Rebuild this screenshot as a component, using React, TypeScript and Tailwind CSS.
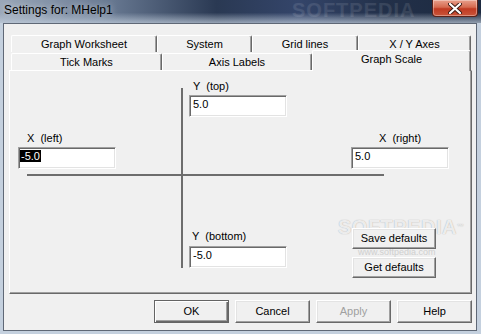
import React, { FC } from "react";

const raised =
  "bg-[#f0f0f0] border border-t-white border-l-white border-r-[#696969] border-b-[#696969] shadow-[inset_-1px_-1px_0_#a0a0a0,inset_1px_1px_0_#e3e3e3]";

const TextBox: FC<{ value: string; selected?: boolean }> = ({ value, selected }) => (
  <div className="w-[98px] h-[22px] bg-white border border-t-[#a0a0a0] border-l-[#a0a0a0] border-r-white border-b-white shadow-[inset_1px_1px_0_#696969,inset_-1px_-1px_0_#e3e3e3] pl-[2px] pt-[2px] leading-[13px]">
    {selected ? <span className="bg-black text-white px-[1px] -ml-[1px]">{value}</span> : <span className="pl-[1px]">{value}</span>}
  </div>
);

const Field: FC<{ label: string; value: string; indent: string; selected?: boolean }> = ({ label, value, indent, selected }) => (
  <div className="flex flex-col gap-[2px]">
    <div className={`h-[13px] leading-[13px] whitespace-pre ${indent}`}>{label}</div>
    <TextBox value={value} selected={selected} />
  </div>
);

const Tab: FC<{ label: string; width: string }> = ({ label, width }) => (
  <div
    className={`${width} h-[17px] shrink-0 bg-[#f0f0f0] rounded-t-[2px] border-t border-l border-t-white border-l-white border-r border-r-[#696969] shadow-[inset_-1px_0_0_#a0a0a0] flex items-start justify-center pt-[2px] leading-[13px]`}
  >
    {label}
  </div>
);

const Button: FC<{ label: string; className: string; disabled?: boolean }> = ({ label, className, disabled }) => (
  <div className={`${className} ${raised} flex items-center justify-center ${disabled ? "text-[#a0a0a0]" : ""}`}>{label}</div>
);

const App: FC = () => {
  return (
    <div className="w-[481px] h-[334px] bg-[#c4d0de] flex flex-col overflow-hidden text-[11px] text-black font-['Liberation_Sans',Arial,sans-serif]">
      {/* Title bar */}
      <div className="relative h-[23px] shrink-0 flex items-start justify-between bg-[linear-gradient(180deg,rgba(255,255,255,0)_55%,rgba(196,208,222,0.7)_100%),linear-gradient(90deg,#9aa7b8_0%,#6a7b94_22%,#2a3953_45%,#34456a_62%,#223049_80%,#1d2a40_100%)]">
        <div className="pl-[4px] pt-[3px] text-[12px] leading-[15px] [text-shadow:0_0_6px_rgba(255,255,255,0.7)]">Settings for: MHelp1</div>
        <div className="absolute left-[292px] top-0 text-[20px] font-bold tracking-[1px] text-white/10 leading-[20px]">SOFTPEDIA</div>
        <div className="relative mr-[3px] w-[46px] h-[17px] rounded-b-[4px] border border-t-0 border-[#5a2219] bg-[linear-gradient(180deg,#e8a08c_0%,#d56a50_45%,#c03a22_55%,#c9553a_100%)] flex items-center justify-center shadow-[inset_0_0_0_1px_rgba(255,255,255,0.35)]">
          <svg width="14" height="11" viewBox="0 0 14 11">
            <path d="M2 1 L12 10 M12 1 L2 10" stroke="#3a1a14" strokeWidth="4" strokeLinecap="round" />
            <path d="M2 1 L12 10 M12 1 L2 10" stroke="#ffffff" strokeWidth="2.2" strokeLinecap="round" />
          </svg>
        </div>
      </div>

      {/* Client area */}
      <div className="ml-[3px] w-[474px] h-[308px] shrink-0 bg-[#f0f0f0] border border-[#5f6876]">
        <div className="ml-[5px] mt-[11px] w-[463px]">
          {/* Back tab row */}
          <div className="flex h-[17px] ml-[2px]">
            <Tab label="Graph Worksheet" width="w-[146px]" />
            <Tab label="System" width="w-[95px]" />
            <Tab label="Grid lines" width="w-[106px]" />
            <Tab label="X / Y Axes" width="w-[113px]" />
          </div>
          {/* Front tab row */}
          <div className="flex h-[18px] ml-[2px] items-end">
            <Tab label="Tick Marks" width="w-[151px]" />
            <Tab label="Axis Labels" width="w-[150px]" />
            <div className="relative z-10 w-[159px] h-[21px] -mb-[1px] shrink-0 bg-[#f0f0f0] rounded-t-[2px] border-t border-l border-t-white border-l-white border-r border-r-[#696969] shadow-[inset_-1px_0_0_#a0a0a0] flex items-start justify-center pt-[2px] leading-[13px]">
              Graph Scale
            </div>
          </div>

          {/* Tab page */}
          <div className="relative h-[224px] border-t border-l border-t-white border-l-white border-r border-b border-r-[#696969] border-b-[#696969] shadow-[inset_-1px_-1px_0_#a0a0a0]">
            <svg className="absolute inset-0" width="461" height="222">
              <rect x="171" y="17" width="2" height="180" fill="#6d6d6d" />
              <rect x="17" y="103" width="357" height="2" fill="#6d6d6d" />
            </svg>
            <div className="absolute left-[328px] top-[146px] text-[20px] leading-[20px] font-bold tracking-[0.5px] text-white/80 [text-shadow:0_0_1px_#9a9a9a]">
              SOFTPEDIA<span className="text-[7px] align-top">™</span>
            </div>
            <div className="absolute left-[348px] top-[176px] text-[9px] leading-[10px] text-[#cfcfcf]">www.softpedia.com</div>

            <div className="relative flex flex-col">
              <div className="mt-[9px] ml-[179px]">
                <Field label="Y  (top)" value="5.0" indent="pl-[4px]" />
              </div>
              <div className="mt-[15px] ml-[8px] flex">
                <Field label="X  (left)" value="-5.0" indent="pl-[9px]" selected />
                <div className="ml-[235px]">
                  <Field label="X  (right)" value="5.0" indent="pl-[28px]" />
                </div>
              </div>
              <div className="mt-[59px] ml-[179px] flex items-start">
                <div className="mt-[2px] flex flex-col gap-[3px]">
                  <div className="h-[13px] leading-[13px] pl-[3px] whitespace-pre">Y  (bottom)</div>
                  <TextBox value="-5.0" />
                </div>
                <div className="ml-[65px] flex flex-col gap-[8px]">
                  <Button label="Save defaults" className="w-[84px] h-[21px]" />
                  <Button label="Get defaults" className="w-[84px] h-[21px]" />
                </div>
              </div>
            </div>
          </div>
        </div>

        {/* Dialog buttons */}
        <div className="mt-[6px] ml-[150px] flex gap-[6px]">
          <div className="w-[75px] h-[23px] bg-[#f0f0f0] border border-[#646464] shadow-[inset_1px_1px_0_#ffffff,inset_-1px_-1px_0_#696969,inset_-2px_-2px_0_#a0a0a0] flex items-center justify-center">
            OK
          </div>
          <Button label="Cancel" className="w-[75px] h-[23px]" />
          <Button label="Apply" className="w-[75px] h-[23px]" disabled />
          <Button label="Help" className="w-[75px] h-[23px]" />
        </div>
      </div>
    </div>
  );
};

export default App;
